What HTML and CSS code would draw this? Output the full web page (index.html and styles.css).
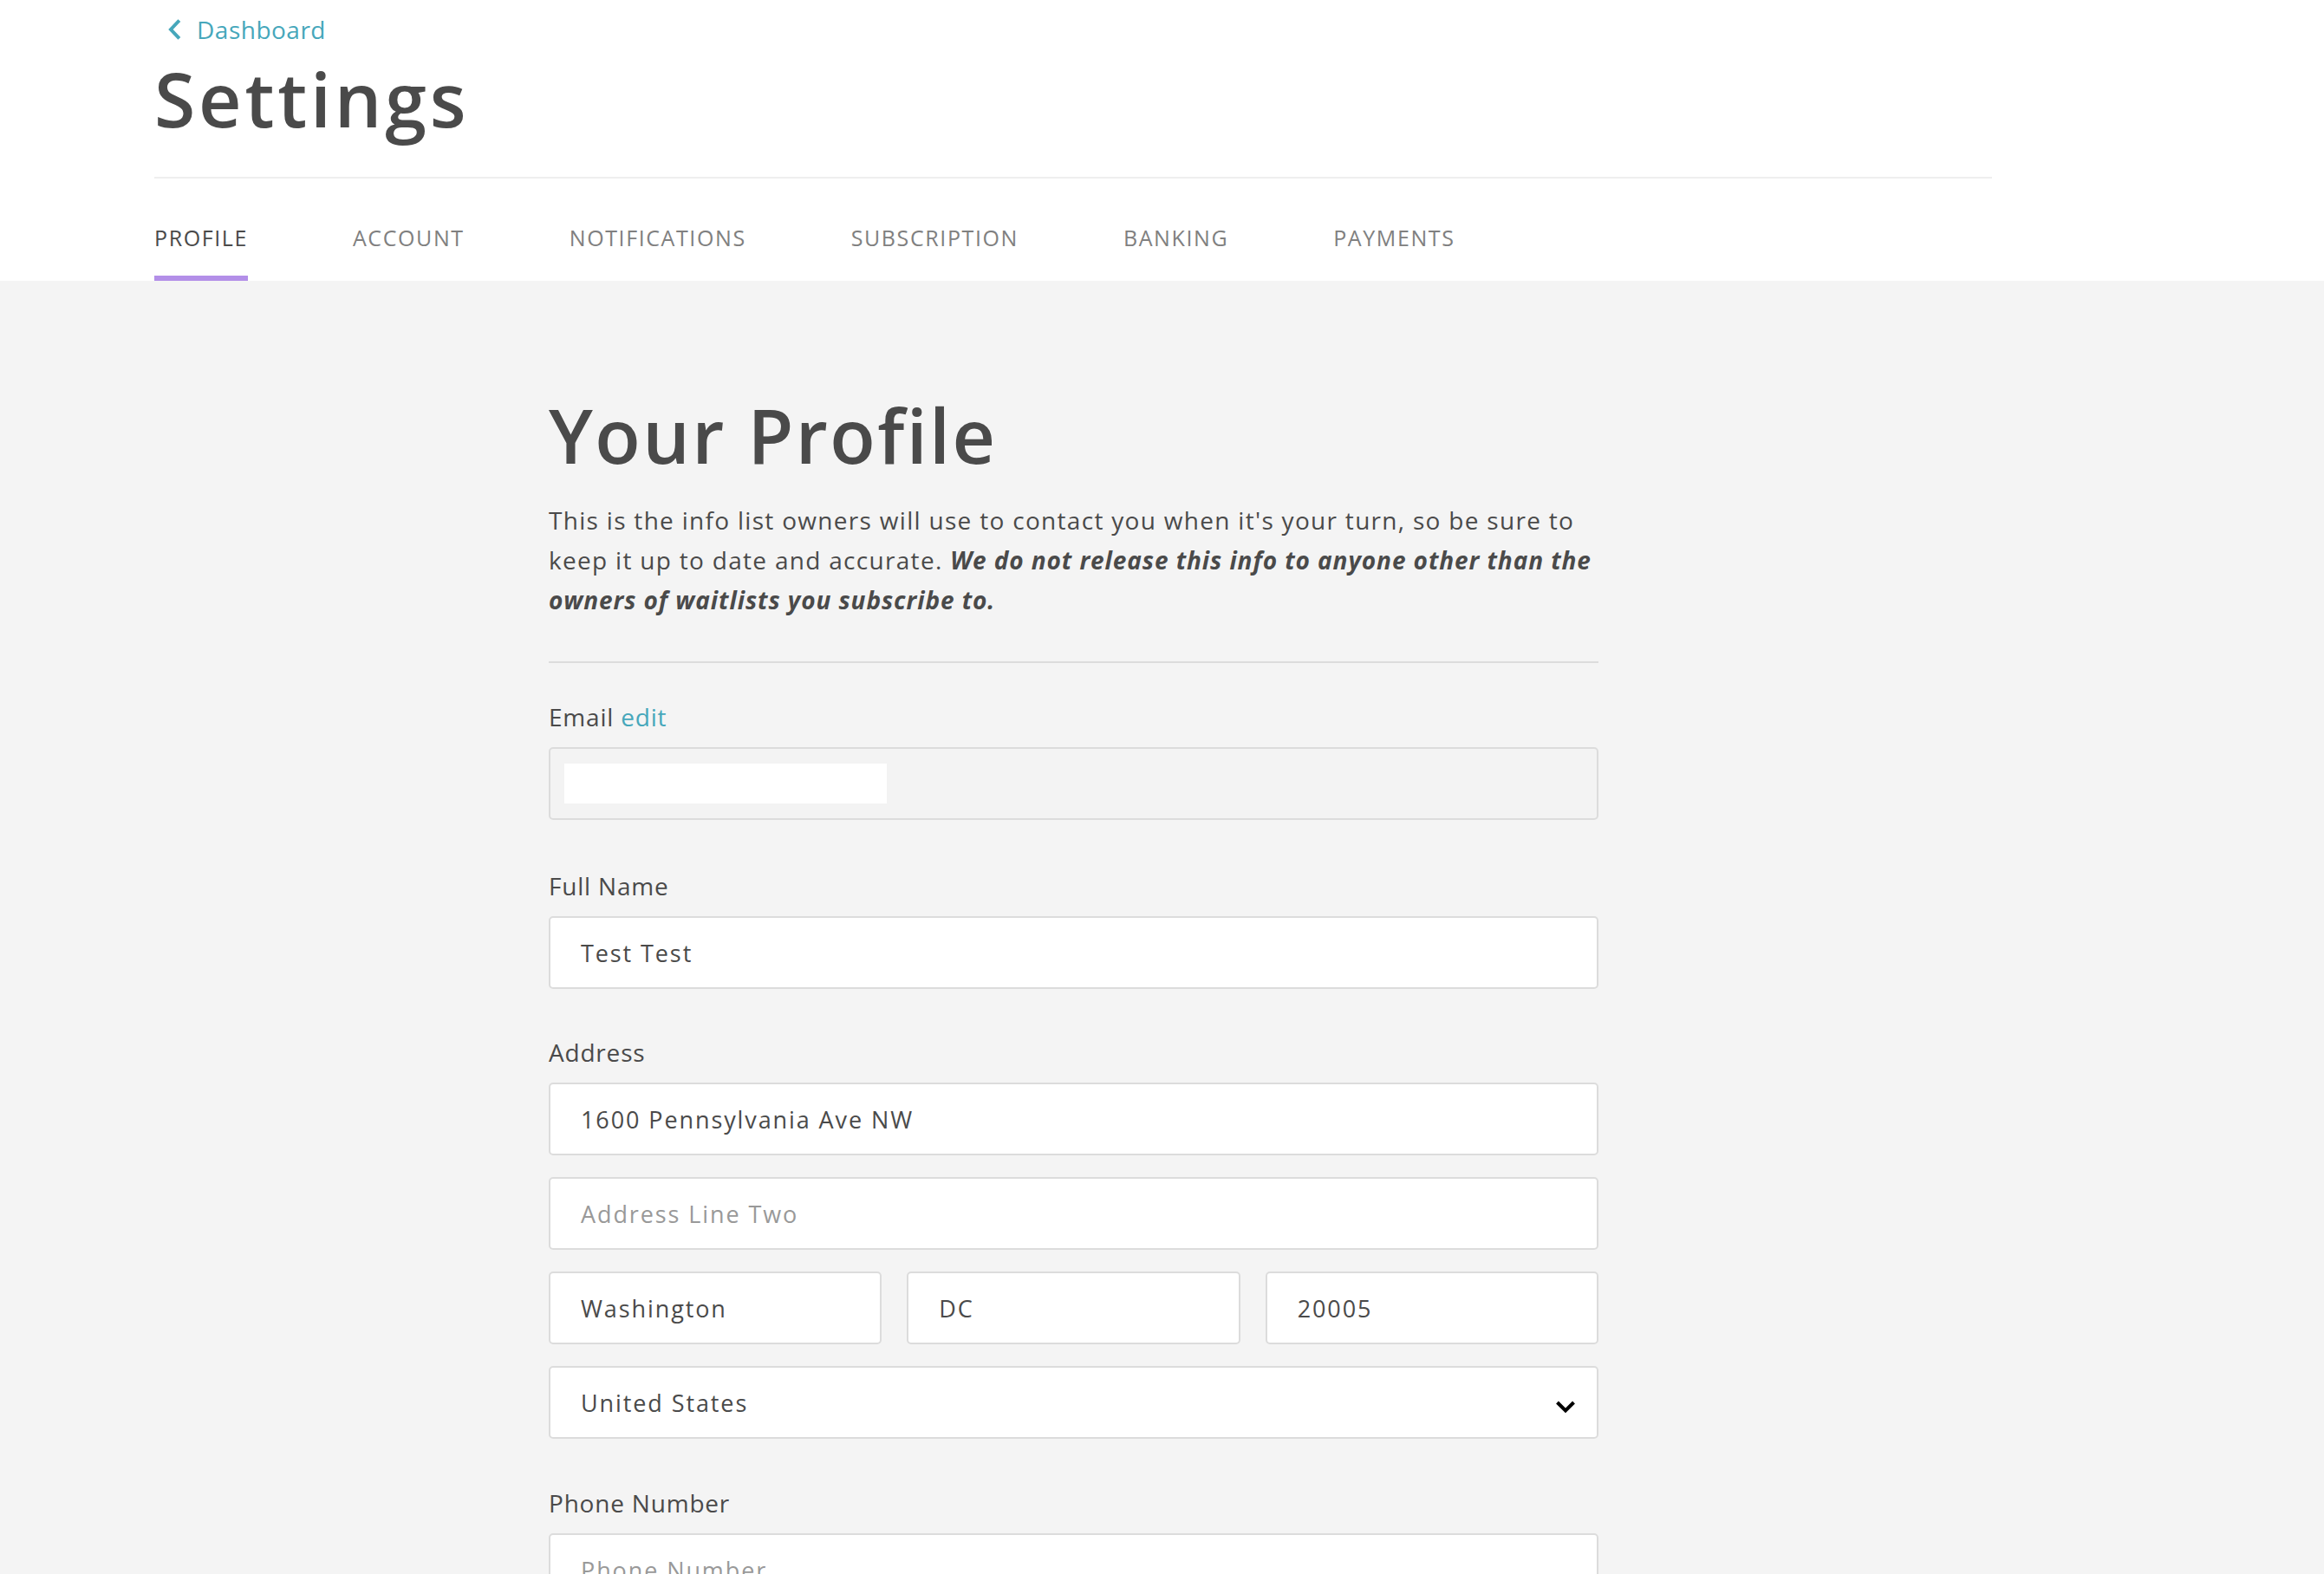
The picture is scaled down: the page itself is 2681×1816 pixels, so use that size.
FILE: index.html
```html
<!DOCTYPE html>
<html lang="en">
<head>
<meta charset="utf-8">
<title>Settings</title>
<link rel="stylesheet" href="styles.css">
</head>
<body>
<header class="top">
  <div class="top-inner">
    <a class="back" href="#">
      <svg class="back-icon" width="16" height="24" viewBox="0 0 16 24" aria-hidden="true"><path d="M12.5 3 L4 12 L12.5 21" fill="none" stroke="#46a7bb" stroke-width="4" stroke-linecap="square"/></svg>
      <span>Dashboard</span>
    </a>
    <h1 class="title">Settings</h1>
    <nav class="tabs">
      <a class="tab active" href="#">PROFILE</a>
      <a class="tab" href="#">ACCOUNT</a>
      <a class="tab" href="#">NOTIFICATIONS</a>
      <a class="tab" href="#">SUBSCRIPTION</a>
      <a class="tab" href="#">BANKING</a>
      <a class="tab" href="#">PAYMENTS</a>
    </nav>
  </div>
</header>
<main class="main">
  <section class="profile">
    <h2 class="profile-title">Your Profile</h2>
    <p class="intro">This is the info list owners will use to contact you when it's your turn, so be sure to keep it up to date and accurate. <em>We do not release this info to anyone other than the owners of waitlists you subscribe to.</em></p>
    <hr class="rule">
    <div class="field field-email">
      <label class="label">Email <a class="edit" href="#">edit</a></label>
      <div class="input disabled"><span class="redact"></span></div>
    </div>
    <div class="field field-name">
      <label class="label">Full Name</label>
      <div class="input">Test Test</div>
    </div>
    <div class="field field-address">
      <label class="label">Address</label>
      <div class="stack">
        <div class="input">1600 Pennsylvania Ave NW</div>
        <div class="input placeholder">Address Line Two</div>
        <div class="row3">
          <div class="input">Washington</div>
          <div class="input">DC</div>
          <div class="input">20005</div>
        </div>
        <div class="input select">
          <span>United States</span>
          <svg class="chev" width="24" height="16" viewBox="0 0 24 16" aria-hidden="true"><path d="M2.5 3 L12 12.5 L21.5 3" fill="none" stroke="#000" stroke-width="4"/></svg>
        </div>
      </div>
    </div>
    <div class="field field-phone">
      <label class="label">Phone Number</label>
      <div class="input placeholder">Phone Number</div>
    </div>
  </section>
</main>
</body>
</html>
```
FILE: styles.css
```css
* { box-sizing: border-box; }
html, body { margin: 0; padding: 0; }
body {
  background: #f4f4f4;
  font-family: "Open Sans", "Noto Sans", sans-serif;
  color: #4a4a4a;
  overflow: hidden;
  height: 1816px;
}
a { text-decoration: none; }

.top { background: #fff; }
.top-inner {
  margin-left: 178px;
  width: 2120px;
  padding-top: 14px;
}
.back {
  display: flex;
  align-items: center;
  gap: 18px;
  margin-left: 15px;
  height: 40px;
  font-size: 28px;
  line-height: 40px;
  color: #46a7bb;
  letter-spacing: 0.5px;
}
.back-icon { display: block; }
.title {
  margin: 8px 0 0;
  font-size: 86px;
  line-height: 103px;
  font-weight: 600;
  letter-spacing: 3.8px;
  padding-bottom: 39px;
  border-bottom: 2px solid #efefef;
}
.tabs {
  display: flex;
  gap: 121px;
  padding-top: 48px;
}
.tab {
  font-size: 25px;
  line-height: 40px;
  letter-spacing: 1.6px;
  color: #808080;
  padding-bottom: 24px;
  border-bottom: 6px solid transparent;
}
.tab.active {
  color: #4a4a4a;
  border-bottom-color: #b38fe8;
}

.main { padding-top: 126px; }
.profile {
  margin-left: 633px;
  width: 1211px;
}
.profile-title {
  margin: 0;
  font-size: 86px;
  line-height: 103px;
  font-weight: 600;
  letter-spacing: 2.4px;
}
.intro {
  margin: 24px 0 0;
  font-size: 28px;
  line-height: 46px;
  letter-spacing: 1.3px;
}
.intro em { font-weight: 700; font-style: italic; letter-spacing: 0.9px; }
.rule {
  margin: 48px 0 0;
  border: 0;
  border-top: 2px solid #dcdcdc;
  height: 0;
}
.field-email { margin-top: 42px; }
.field-name { margin-top: 56px; }
.field-address { margin-top: 53px; }
.field-phone { margin-top: 54px; }
.label {
  display: block;
  font-size: 28px;
  line-height: 40px;
  letter-spacing: 0.8px;
  margin-bottom: 15px;
}
.edit { color: #46a7bb; }
.input {
  display: flex;
  align-items: center;
  height: 84px;
  padding: 0 35px;
  background: #fff;
  border: 2px solid #dcdcdc;
  border-radius: 5px;
  font-size: 27px;
  letter-spacing: 1.9px;
  color: #4a4a4a;
}
.input.disabled {
  background: #f3f3f3;
  padding: 0 16px;
}
.redact {
  display: block;
  width: 372px;
  height: 46px;
  background: #fff;
}
.placeholder { color: #999; }
.stack {
  display: flex;
  flex-direction: column;
  gap: 25px;
}
.row3 {
  display: grid;
  grid-template-columns: 1fr 1fr 1fr;
  gap: 29px;
}
.select { justify-content: space-between; padding-right: 24px; }
.chev { display: block; margin-top: 10px; }
```
